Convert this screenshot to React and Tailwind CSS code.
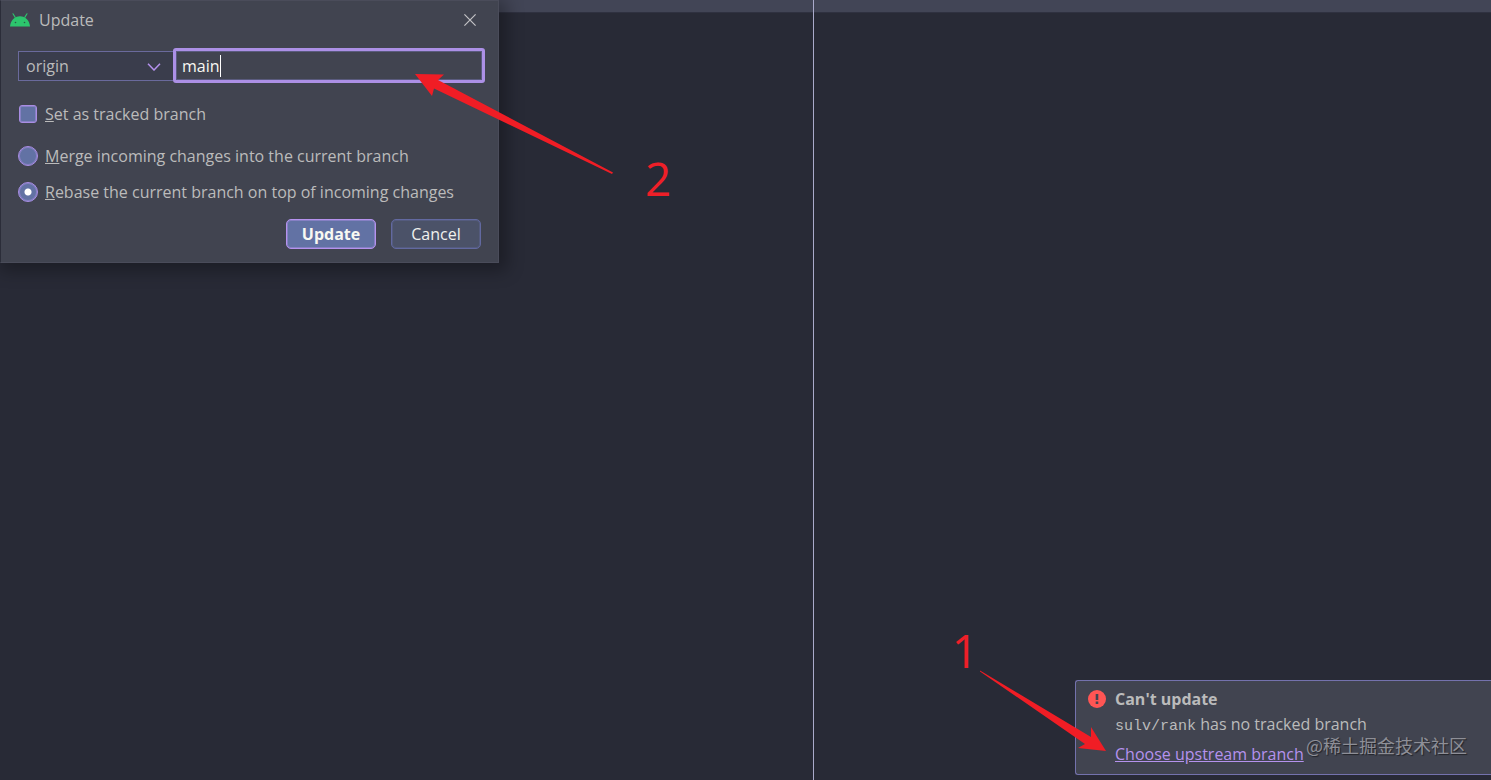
import { useState } from "react";

const Pane = ({ className }) => (
  <section className={className}>
    <div className="h-3 bg-[#424556]" />
    <div className="h-px bg-[#2f3140]" />
  </section>
);

const AndroidIcon = () => (
  <svg viewBox="0 0 20 14" className="w-5 h-[14px]" fill="none">
    <path
      d="M3 .8 5.2 4.4M17 .8 14.8 4.4"
      stroke="#2cc66d"
      strokeWidth="1.1"
      strokeLinecap="round"
    />
    <path d="M0 13.5C.4 7.5 4.4 3.2 10 3.2s9.600 4.300 10 10.300Z" fill="#2cc66d" />
    <circle cx="5.500" cy="9.500" r=".8" fill="#2a5a48" />
    <circle cx="14.500" cy="9.500" r=".8" fill="#2a5a48" />
  </svg>
);

const ErrorIcon = () => (
  <svg viewBox="0 0 18 18" className="w-[18px] h-[18px] mt-1 shrink-0">
    <circle cx="9" cy="9" r="9" fill="#ff5554" />
    <path d="M7.700 4h2.600v6H7.700zM7.700 11.500h2.600V14H7.700z" fill="#414450" />
  </svg>
);

const RadioOption = ({ id, checked, onChange, children }) => (
  <div className="flex items-center gap-[7px] h-6">
    <input
      type="radio"
      name="strategy"
      id={id}
      checked={checked}
      onChange={onChange}
      className="appearance-none w-5 h-5 rounded-full border border-[#a98de3] inset-ring inset-ring-[#a98de3]/50 bg-[#6272a4] checked:bg-[radial-gradient(circle,#ffffff_3px,#6272a4_4px)]"
    />
    <label htmlFor={id}>{children}</label>
  </div>
);

const UpdateDialog = () => {
  const [branch, setBranch] = useState("main");
  const [strategy, setStrategy] = useState("rebase");

  return (
    <form
      role="dialog"
      aria-label="Update"
      onSubmit={(e) => e.preventDefault()}
      className="absolute top-0 left-0 w-[499px] pb-[13px] bg-[#414450] border border-[#4a4c5a] border-l-[#2b2d39] shadow-[4px_4px_16px_4px_rgba(0,0,0,0.3)]"
    >
      {/* Title bar */}
      <div className="flex items-center h-[38px] pl-[9px] pr-[22px]">
        <AndroidIcon />
        <h1 className="ml-[9px] flex-1">Update</h1>
        <button type="button" aria-label="Close">
          <svg viewBox="0 0 12 12" className="w-3 h-3" stroke="#c3c3c6" fill="none">
            <path d="M.4.4 11.600 11.600M11.600.4.4 11.600" strokeWidth="1.200" />
          </svg>
        </button>
      </div>

      {/* Remote and branch */}
      <div className="flex items-center mt-[9px] pl-[17px] pr-[13px]">
        <div className="relative w-[155px]">
          <select
            aria-label="Remote"
            className="appearance-none w-full h-[30px] pl-[7px] border border-r-0 border-[#6a6a9c] bg-[#3a3d4c]"
          >
            <option>origin</option>
          </select>
          <svg
            viewBox="0 0 14 8"
            className="absolute right-3 top-3 w-[14px] h-2 pointer-events-none"
            fill="none"
            stroke="#b592ee"
            strokeWidth="1.500"
          >
            <path d="M1 .8 7 7 13 .8" />
          </svg>
        </div>
        <div className="flex flex-1 items-center h-[35px] pl-[6px] border-[3px] border-[#ac90e6] inset-ring inset-ring-[#6a6a9c]/60 rounded-[3px] bg-[#414450]">
          <input
            type="text"
            aria-label="Branch"
            value={branch}
            onChange={(e) => setBranch(e.target.value)}
            className="field-sizing-content max-w-full text-[#f8f8f2] outline-none caret-transparent"
          />
          <span className="w-px h-[22px] bg-white" />
        </div>
      </div>

      {/* Options */}
      <div className="pl-[17px]">
        <div className="flex items-center gap-2 h-6 mt-[19px] pl-px">
          <input
            type="checkbox"
            id="tracked"
            className="appearance-none w-[18px] h-[18px] rounded-[3px] border border-[#a98de3] inset-ring inset-ring-[#a98de3]/50 bg-[#6272a4]"
          />
          <label htmlFor="tracked">
            <u>S</u>et as tracked branch
          </label>
        </div>
        <div className="flex flex-col gap-3 mt-[18px]">
          <RadioOption
            id="merge"
            checked={strategy === "merge"}
            onChange={() => setStrategy("merge")}
          >
            <u>M</u>erge incoming changes into the current branch
          </RadioOption>
          <RadioOption
            id="rebase"
            checked={strategy === "rebase"}
            onChange={() => setStrategy("rebase")}
          >
            <u>R</u>ebase the current branch on top of incoming changes
          </RadioOption>
        </div>
      </div>

      {/* Buttons */}
      <div className="flex justify-end gap-[15px] mt-[15px] pr-[17px]">
        <button
          type="submit"
          className="w-[90px] h-[30px] rounded-[5px] border border-[#b592ee] inset-ring inset-ring-[#a98de3]/50 bg-[#6272a4] font-bold text-[#f8f8f2]"
        >
          Update
        </button>
        <button
          type="button"
          className="w-[90px] h-[30px] rounded-[5px] border border-[#6269a0] inset-ring inset-ring-[#6269a0]/40 bg-[#4b5268] text-[#f0f0ee]"
        >
          Cancel
        </button>
      </div>
    </form>
  );
};

const Notification = () => (
  <aside className="absolute right-0 bottom-[5px] flex gap-[9px] w-[416px] h-[95px] pl-3 pt-[5px] border border-r-0 border-[#7472ad] rounded-l-[3px] bg-[#414450]">
    <ErrorIcon />
    <div>
      <h2 className="font-bold leading-[26px]">Can't update</h2>
      <p>
        <code className="font-['Liberation_Mono'] text-[15px] leading-none">
          sulv/rank
        </code>{" "}
        has no tracked branch
      </p>
      <a href="#" className="block mt-1 leading-7 text-[#b592ee] underline">
        Choose upstream branch
      </a>
    </div>
  </aside>
);

const App = () => {
  return (
    <main className="relative grid grid-cols-[6fr_5fr] h-screen overflow-hidden bg-[#282a36] font-['Open_Sans',sans-serif] text-base text-[#bbbbbb]">
      <Pane />
      <Pane className="border-l border-[#aaaacb]" />

      <UpdateDialog />
      <Notification />

      {/* Step 2: type the branch name */}
      <svg
        viewBox="0 0 200 102"
        className="absolute left-[414px] top-[73px] w-[200px] h-[102px]"
        fill="#f01d25"
      >
        <path d="M1 1 30 1.500 24 7 199 99.500 198 101 20 15.500 18 23Z" />
      </svg>
      <span className="absolute left-[645px] top-[146px] text-[46px] leading-16 text-[#ee1f28]">
        2
      </span>

      {/* Step 1: open the branch chooser */}
      <svg
        viewBox="0 0 128 82"
        className="absolute right-[384px] bottom-[28px] w-[128px] h-[82px]"
        fill="#f01d25"
      >
        <path d="M1 .5 112 67 112 57 127 81 99 78 106 74 1 1.500Z" />
      </svg>
      <span className="absolute right-[513px] bottom-[98px] text-[46px] leading-16 text-[#ee1f28]">
        1
      </span>

      <span className="absolute right-6 bottom-[23px] font-['Noto_Sans_CJK_SC',sans-serif] text-lg leading-6 text-[#8e8f97] text-shadow-[1px_1px_1px_rgba(0,0,0,0.5)]">
        @稀土掘金技术社区
      </span>
    </main>
  );
};

export default App;
